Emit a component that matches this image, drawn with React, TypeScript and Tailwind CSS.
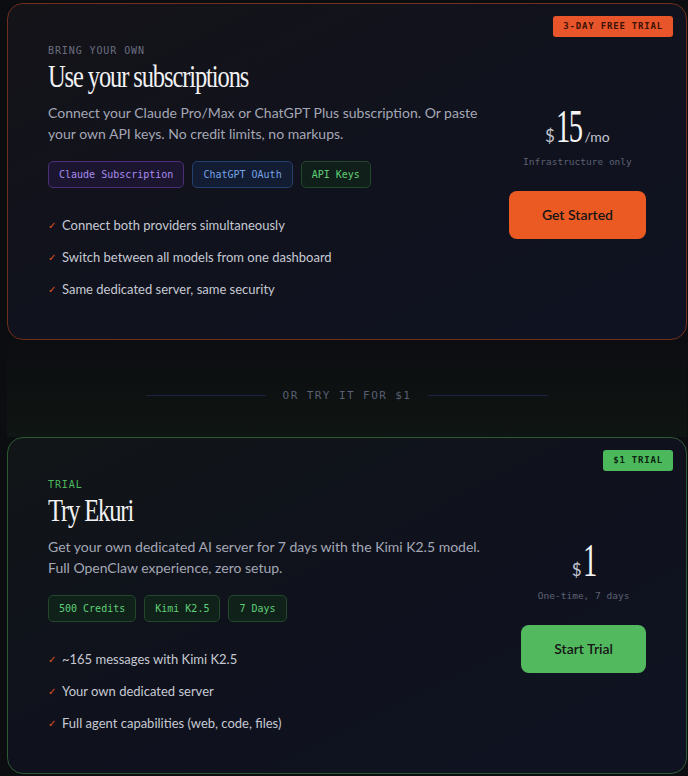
const sans = "font-['Lato','Open_Sans',sans-serif]";
const mono = "font-['DejaVu_Sans_Mono','Liberation_Mono',monospace]";
const serif = "font-['Liberation_Serif','DejaVu_Serif',serif]";

type Pill = { label: string; className: string };

function Check({ children }: { children: React.ReactNode }) {
  return (
    <li className="flex items-center gap-[8px] leading-[20px]">
      <span className="w-[6px] text-[10px] text-[#e0531f]">✓</span>
      <span className={`${sans} text-[13px] text-[#c6c9d3]`}>{children}</span>
    </li>
  );
}

function PlanCard({
  accent,
  badge,
  label,
  title,
  lines,
  pills,
  checks,
  price,
  priceFix,
  unit,
  note,
  cta,
}: {
  accent: "orange" | "green";
  badge: string;
  label: string;
  title: string;
  lines: string[];
  pills: Pill[];
  checks: string[];
  price: string;
  priceFix: string;
  unit?: string;
  note: string;
  cta: string;
}) {
  const orange = accent === "orange";
  return (
    <div
      className={`relative flex items-center rounded-[16px] border px-[40px] pt-[40px] pb-[40px] ${
        orange
          ? "border-[#6e2f1c] bg-gradient-to-br from-[#141318] via-[#10121d] to-[#0f1221]"
          : "border-[#2c5a33] bg-gradient-to-br from-[#111517] via-[#0f121d] to-[#0f1221]"
      }`}
    >
      <span
        className={`absolute right-[13px] top-[12px] rounded-[3px] px-[10px] py-[5px] text-[9px] font-bold leading-[11px] tracking-[0.09em] ${mono} ${
          orange ? "bg-[#e8552a] text-[#3a1206]" : "bg-[#4cb85c] text-[#0a2410]"
        }`}
      >
        {badge}
      </span>

      <div className="flex-1">
        <div
          className={`${mono} text-[10px] leading-[14px] tracking-[0.09em] ${
            orange ? "text-[#6b6f80]" : "text-[#4cb85c]"
          }`}
        >
          {label}
        </div>
        <h2
          className={`${serif} mt-[3px] origin-left scale-x-[0.79] whitespace-nowrap text-[31px] leading-[32px] tracking-[-0.045em] text-[#f1f1f3]`}
        >
          {title}
        </h2>
        <p className={`${sans} mt-[9px] text-[14px] leading-[21px] text-[#a4a7b5]`}>
          {lines[0]}
          <br />
          {lines[1]}
        </p>
        <div className="mt-[17px] flex gap-[8px]">
          {pills.map((p) => (
            <span
              key={p.label}
              className={`${mono} rounded-[5px] border px-[10px] text-[10px] leading-[25px] ${p.className}`}
            >
              {p.label}
            </span>
          ))}
        </div>
        <ul className="mt-[27px] space-y-[12px]">
          {checks.map((c) => (
            <Check key={c}>{c}</Check>
          ))}
        </ul>
      </div>

      <div className="flex flex-col items-center">
        <div className="flex items-baseline text-[#c3c6d0]">
          <span className={`${sans} mr-[1px] text-[17px]`}>$</span>
          <span
            className={`${serif} inline-block origin-left scale-x-[0.62] text-[46px] leading-[46px] tracking-[-0.05em] text-[#f4f4f6] ${priceFix}`}
          >
            {price}
          </span>
          {unit && <span className={`${sans} ml-[3px] text-[14px]`}>{unit}</span>}
        </div>
        <div className={`${mono} mt-[5px] text-[9.5px] text-[#5d6173]`}>{note}</div>
        <button
          className={`${sans} mt-[21px] rounded-[8px] px-[33px] py-[14px] text-[14px] font-semibold leading-[20px] text-[#161616] ${
            orange ? "bg-[#ec5a24]" : "bg-[#52b95f]"
          }`}
        >
          {cta}
        </button>
      </div>
    </div>
  );
}

export default function App() {
  return (
    <div className="min-h-[776px] bg-[#0c0d11] pl-[7px] pr-[1px] pt-[3px]">
      <PlanCard
        accent="orange"
        badge="3-DAY FREE TRIAL"
        label="BRING YOUR OWN"
        title="Use your subscriptions"
        lines={[
          "Connect your Claude Pro/Max or ChatGPT Plus subscription. Or paste",
          "your own API keys. No credit limits, no markups.",
        ]}
        pills={[
          {
            label: "Claude Subscription",
            className: "border-[#4a2f78] bg-[#1c1530] text-[#a88bef]",
          },
          {
            label: "ChatGPT OAuth",
            className: "border-[#23406e] bg-[#121c32] text-[#76a3e6]",
          },
          {
            label: "API Keys",
            className: "border-[#22472c] bg-[#111f1a] text-[#5fcf78]",
          },
        ]}
        checks={[
          "Connect both providers simultaneously",
          "Switch between all models from one dashboard",
          "Same dedicated server, same security",
        ]}
        price="15"
        priceFix="mr-[-16px]"
        unit="/mo"
        note="Infrastructure only"
        cta="Get Started"
      />

      <div className="flex items-center justify-center gap-[17px] bg-gradient-to-b from-transparent to-[#0f1512] pb-[35px] pt-[49px]">
        <span className="h-px w-[120px] bg-[#1c2340]" />
        <span className={`${mono} text-[11px] leading-[13px] tracking-[0.13em] text-[#5a5f72]`}>
          OR TRY IT FOR $1
        </span>
        <span className="h-px w-[120px] bg-[#1c2340]" />
      </div>

      <PlanCard
        accent="green"
        badge="$1 TRIAL"
        label="TRIAL"
        title="Try Ekuri"
        lines={[
          "Get your own dedicated AI server for 7 days with the Kimi K2.5 model.",
          "Full OpenClaw experience, zero setup.",
        ]}
        pills={[
          { label: "500 Credits", className: "border-[#22472c] bg-[#10211a] text-[#5fcf78]" },
          { label: "Kimi K2.5", className: "border-[#22472c] bg-[#10211a] text-[#5fcf78]" },
          { label: "7 Days", className: "border-[#22472c] bg-[#10211a] text-[#5fcf78]" },
        ]}
        checks={[
          "~165 messages with Kimi K2.5",
          "Your own dedicated server",
          "Full agent capabilities (web, code, files)",
        ]}
        price="1"
        priceFix="mr-[-8px]"
        note="One-time, 7 days"
        cta="Start Trial"
      />
    </div>
  );
}
